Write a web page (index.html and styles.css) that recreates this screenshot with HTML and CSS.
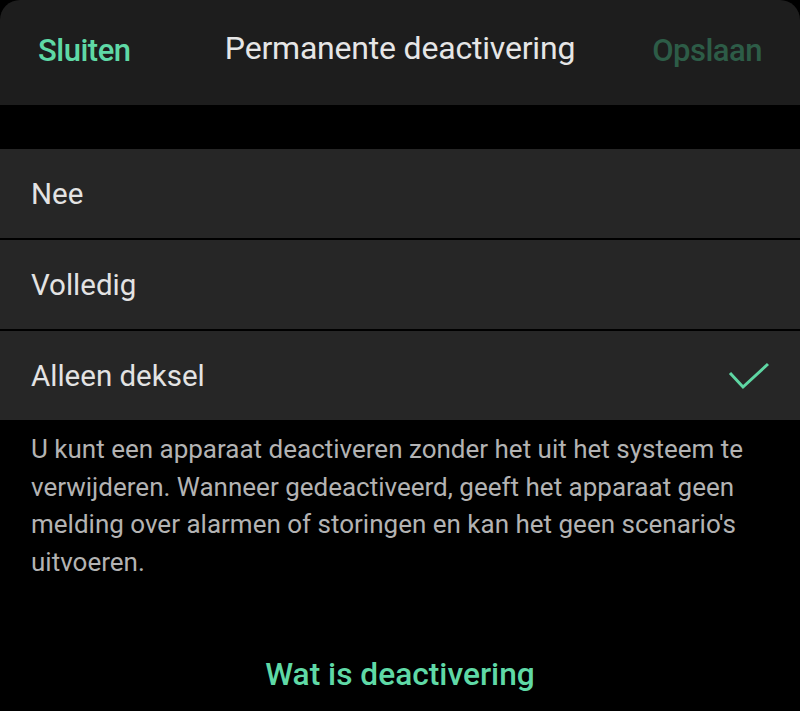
FILE: index.html
```
<!DOCTYPE html>
<html lang="nl">
<head>
<meta charset="utf-8">
<link rel="stylesheet" href="styles.css">
</head>
<body>
<div class="sheet">
  <header class="topbar">
    <span class="btn btn-close">Sluiten</span>
    <span class="title">Permanente deactivering</span>
    <span class="btn btn-save">Opslaan</span>
  </header>
  <div class="spacer"></div>
  <ul class="options">
    <li class="option">Nee</li>
    <li class="option">Volledig</li>
    <li class="option selected">Alleen deksel
      <svg class="check" width="42" height="30" viewBox="0 0 42 30"><polyline points="2,11 15,25 40,2" fill="none" stroke="#5ed6a3" stroke-width="3"/></svg>
    </li>
  </ul>
  <p class="desc">U kunt een apparaat deactiveren zonder het uit het systeem te verwijderen. Wanneer gedeactiveerd, geeft het apparaat geen melding over alarmen of storingen en kan het geen scenario's uitvoeren.</p>
  <div class="linkwrap"><span class="link">Wat is deactivering</span></div>
</div>
</body>
</html>
```
FILE: styles.css
```
* { box-sizing: border-box; }
html, body { margin: 0; padding: 0; background: #000; }
body { font-family: Roboto, "Noto Sans", sans-serif; width: 800px; height: 711px; overflow: hidden; }
.sheet { display: flex; flex-direction: column; }
.topbar {
  height: 105px;
  background: #1d1d1d;
  border-radius: 20px 20px 0 0;
  display: grid;
  grid-template-columns: 1fr auto 1fr;
  align-items: center;
  padding: 0 38px 4px 38px;
}
.btn { font-size: 31px; font-weight: 500; letter-spacing: -0.5px; }
.btn-close { color: #5fd9a6; justify-self: start; }
.btn-save { color: #2d5c47; justify-self: end; }
.title { color: #e6e6e6; font-size: 32px; letter-spacing: -0.2px; margin-bottom: 6px; }
.spacer { height: 44px; }
.options { list-style: none; margin: 0; padding: 0; display: flex; flex-direction: column; gap: 2px; }
.option {
  height: 89px;
  background: #262626;
  color: #e3e3e3;
  font-size: 29.5px;
  display: flex;
  align-items: center;
  justify-content: space-between;
  padding: 0 30px 0 31px;
}
.check { margin-top: 2px; }
.desc {
  margin: 11px 0 0 0;
  padding: 0 31px;
  color: #b3b3b3;
  font-size: 26px;
  line-height: 37.5px;
}
.linkwrap { display: flex; justify-content: center; margin-top: 75px; }
.link { color: #5fd9a6; font-size: 31.7px; font-weight: 500; }
```
